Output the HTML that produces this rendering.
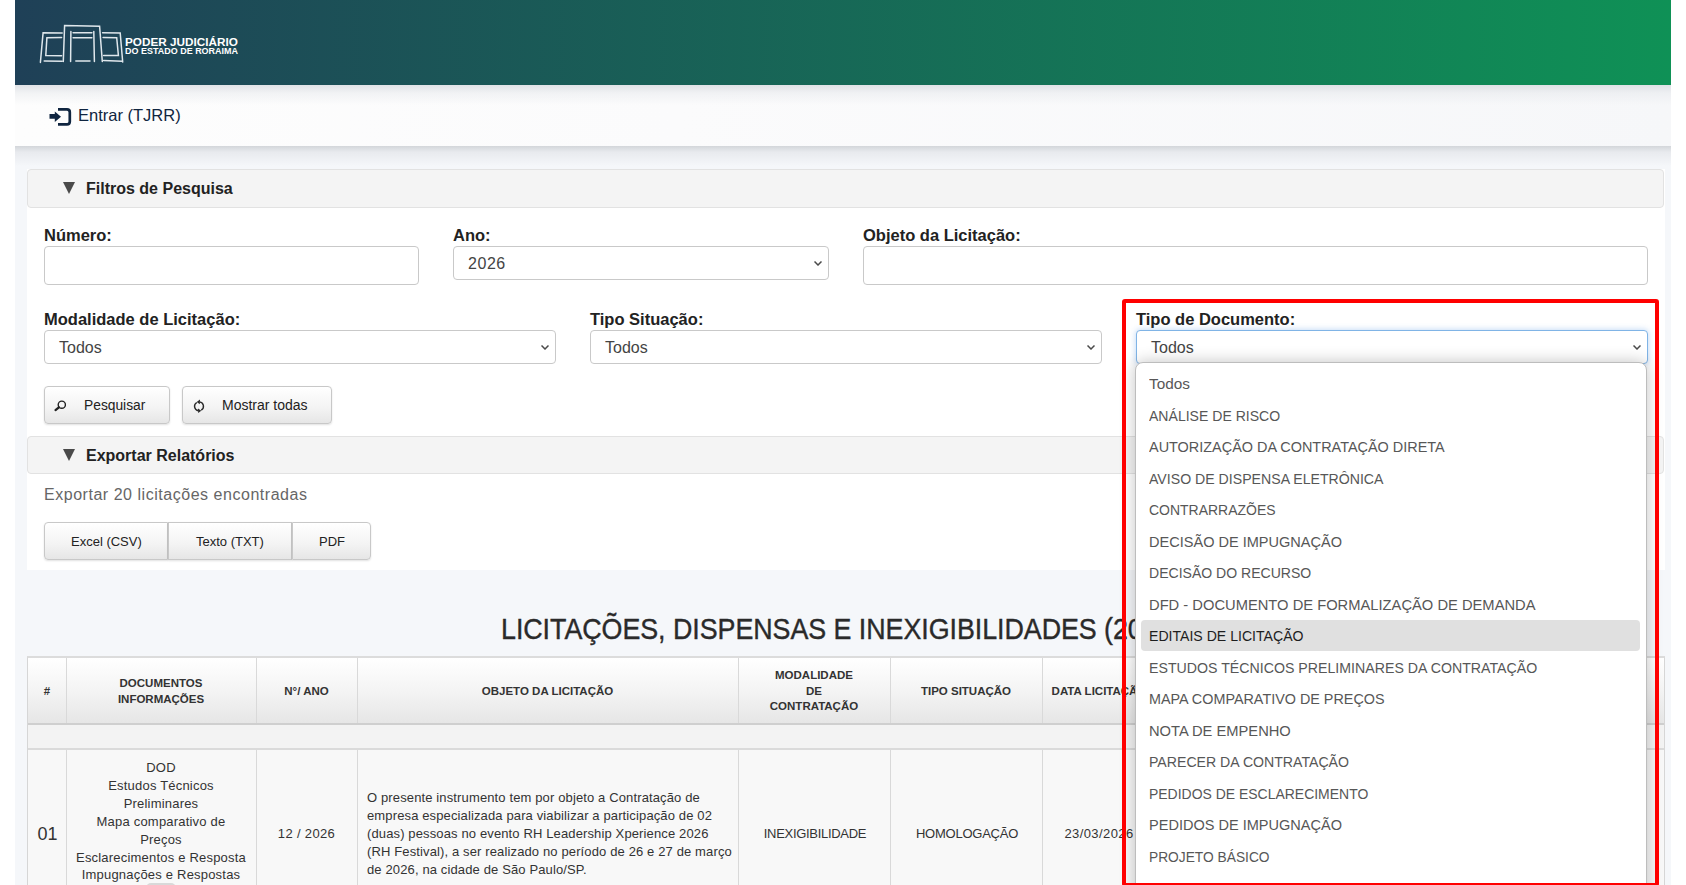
<!DOCTYPE html>
<html><head><meta charset="utf-8">
<style>
*{box-sizing:border-box;margin:0;padding:0}
html,body{width:1686px;height:885px;overflow:hidden;background:#fff;font-family:"Liberation Sans",sans-serif;color:#222}
.abs{position:absolute}
#wrap{position:absolute;left:15px;top:0;width:1656px;height:885px;background:#f5f7fa}
#hdr{position:absolute;left:0;top:0;width:1656px;height:85px;background:linear-gradient(90deg,#1f4057 0%,#0f9156 100%)}
#nav{position:absolute;left:0;top:85px;width:1656px;height:61px;background:linear-gradient(180deg,rgba(215,218,223,.75) 0px,rgba(225,228,232,.4) 8px,rgba(240,242,245,0) 20px),linear-gradient(90deg,#fdfdfd 0%,#fbfbfc 40%,#f6f7f9 100%)}
#navshadow{position:absolute;left:0;top:146px;width:1656px;height:20px;background:linear-gradient(180deg,#d3d6da 0,#e8eaee 6px,#f5f7fa 20px)}
#panel{position:absolute;left:12px;top:169px;width:1638px;height:401px;background:#fff}
.sechdr{position:absolute;left:0;width:1637px;height:38.5px;background:#f4f4f4;border:1px solid #e2e2e2;border-radius:4px}
.sechdr .tri{position:absolute;left:35px;top:12px;width:0;height:0;border-left:6.6px solid transparent;border-right:6.6px solid transparent;border-top:12.5px solid #4a4a4a}
.sechdr .t{position:absolute;left:58px;top:9px;font-size:16px;font-weight:bold;color:#222;line-height:20px}
.lbl{position:absolute;font-size:16.5px;font-weight:bold;color:#222;line-height:18px}
.inp{position:absolute;background:#fff;border:1px solid #c9c9c9;border-radius:4px}
.sel{position:absolute;background:#fff;border:1px solid #c9c9c9;border-radius:4px;font-size:16px;color:#444}
.sel span{position:absolute;left:14px;top:8px;line-height:18px}
.chev{position:absolute;right:6px;top:14px;width:8px;height:5px}
.btn{position:absolute;background:linear-gradient(180deg,#ffffff 0%,#f3f3f3 60%,#e6e6e6 100%);border:1px solid #c8c8c8;border-radius:4px;box-shadow:0 1px 2px rgba(0,0,0,.12);font-size:13px;color:#222}
.btn span{position:absolute;line-height:15px}

.thead{background:linear-gradient(180deg,#ffffff 0%,#f4f4f4 50%,#e6e6e6 100%)}
.vl{position:absolute;top:0;width:1px;height:300px;background:#d9d9d9}
.th{position:absolute;text-align:center;font-size:11.5px;font-weight:bold;color:#333;line-height:15.7px}
.td{position:absolute;text-align:center;font-size:13px;color:#333;line-height:17.9px}

.opt{position:absolute;left:13px;font-size:15.5px;transform-origin:0 50%;color:#575757;line-height:32px;white-space:nowrap}
.opt.hl{color:#1e1e1e}
</style></head><body>
<div id="wrap">
  <div id="hdr">
    <svg class="abs" style="left:-15px;top:0" width="140" height="85" viewBox="0 0 140 85">
      <g fill="none" stroke="#dfe7ec" stroke-width="1.5" stroke-linecap="round">
        <path d="M62.2 33.1 L43.1 32.8 L40.4 62.4 M44.2 60.9 L62.2 61.2"/>
        <path d="M61.6 37.5 L46.9 37.7 L45.8 55.5 L61.6 55.7"/>
        <path d="M63.3 61.5 L64.6 25.5 L99.6 26.3 L102.3 61.5"/>
        <path d="M70.9 31.5 L70.6 61.5 M93.8 31.5 L94.4 61.5 M73.1 32.8 L91.9 32.8 M73.1 37.7 L91.9 37.7 M75.8 60.9 L90 60.9"/>
        <path d="M102.6 32.8 L120.2 32.9 L122.7 62 M103.6 60.6 L122.2 61.3"/>
        <path d="M103.1 37.5 L116.7 37.7 L118.4 55.5 L103.6 55.5"/>
      </g>
    </svg>
    <div class="abs" style="left:110.3px;top:38px;font-size:10px;font-weight:bold;color:#fff;line-height:10px;white-space:nowrap;transform:scaleX(1.174);transform-origin:0 0">PODER JUDICIÁRIO</div>
    <div class="abs" style="left:110.3px;top:46.5px;font-size:8.8px;font-weight:bold;color:#fff;line-height:8.8px;white-space:nowrap;transform:scaleX(1.02);transform-origin:0 0">DO ESTADO DE RORAIMA</div>
  </div>
  <div id="navshadow"></div>
  <div id="nav">
    <svg class="abs" style="left:34px;top:23px" width="23" height="19" viewBox="0 0 23 19">
      <path d="M9 1.35 H18 Q20.8 1.35 20.8 4.2 V13.6 Q20.8 16.45 18 16.45 H9" fill="none" stroke="#0f2540" stroke-width="2.7"/>
      <path d="M0.5 6 H5.8 V3.4 L12 8.65 L5.8 13.9 V10.7 H0.5 Z" fill="#0f2540"/>
    </svg>
    <div class="abs" style="left:63px;top:20px;font-size:16.5px;color:#0f2540;line-height:20px">Entrar (TJRR)</div>
  </div>

  <div id="panel">
    <div class="sechdr" style="top:0"><div class="tri"></div><div class="t">Filtros de Pesquisa</div></div>
    <div class="lbl" style="left:17px;top:57px">Número:</div>
    <div class="inp" style="left:17px;top:77px;width:375px;height:39px"></div>
    <div class="lbl" style="left:426px;top:57px">Ano:</div>
    <div class="sel" style="left:426px;top:77px;width:376px;height:34px"><span style="letter-spacing:0.55px">2026</span><svg class="chev" viewBox="0 0 8 5"><path d="M0.5 0.5 L4 4 L7.5 0.5" fill="none" stroke="#4a4a4a" stroke-width="1.5"/></svg></div>
    <div class="lbl" style="left:836px;top:57px">Objeto da Licitação:</div>
    <div class="inp" style="left:836px;top:77px;width:785px;height:39px"></div>

    <div class="lbl" style="left:17px;top:141px">Modalidade de Licitação:</div>
    <div class="sel" style="left:17px;top:161px;width:512px;height:34px"><span>Todos</span><svg class="chev" viewBox="0 0 8 5"><path d="M0.5 0.5 L4 4 L7.5 0.5" fill="none" stroke="#4a4a4a" stroke-width="1.5"/></svg></div>
    <div class="lbl" style="left:563px;top:141px">Tipo Situação:</div>
    <div class="sel" style="left:563px;top:161px;width:512px;height:34px"><span>Todos</span><svg class="chev" viewBox="0 0 8 5"><path d="M0.5 0.5 L4 4 L7.5 0.5" fill="none" stroke="#4a4a4a" stroke-width="1.5"/></svg></div>
    <div class="lbl" style="left:1109px;top:141px">Tipo de Documento:</div>
    <div class="sel" style="left:1109px;top:161px;width:512px;height:34px;border-color:#80b4e6;box-shadow:0 0 6px rgba(100,160,230,.45)"><span>Todos</span><svg class="chev" viewBox="0 0 8 5"><path d="M0.5 0.5 L4 4 L7.5 0.5" fill="none" stroke="#4a4a4a" stroke-width="1.5"/></svg></div>

    <div class="btn" style="left:17px;top:217px;width:126px;height:38px">
      <svg class="abs" style="left:7px;top:11px" width="14" height="14" viewBox="0 0 14 14"><circle cx="9.8" cy="6.7" r="3.6" fill="none" stroke="#222" stroke-width="1.4"/><path d="M6.9 9.3 L3.5 12.1" stroke="#222" stroke-width="2.2" stroke-linecap="round"/></svg>
      <span style="left:39px;top:11px;font-size:13.8px">Pesquisar</span>
    </div>
    <div class="btn" style="left:155px;top:217px;width:150px;height:38px">
      <svg class="abs" style="left:9px;top:11px" width="14" height="16" viewBox="0 0 14 16"><path d="M4.8 4.49 A4.4 4.4 0 0 0 6.4 12.7" fill="none" stroke="#2a2a2a" stroke-width="1.4"/><path d="M6 10.5 L9.3 12.7 L6.2 15 Z" fill="#2a2a2a"/><path d="M9.2 12.11 A4.4 4.4 0 0 0 7.6 3.9" fill="none" stroke="#2a2a2a" stroke-width="1.4"/><path d="M8 1.6 L4.7 3.9 L7.8 6.2 Z" fill="#2a2a2a"/></svg>
      <span style="left:39px;top:11px;font-size:14px">Mostrar todas</span>
    </div>

    <div class="sechdr" style="top:267px;height:37.5px"><div class="tri" style="top:12px"></div><div class="t" style="top:9px">Exportar Relatórios</div></div>
    <div class="abs" style="left:17px;top:316px;font-size:16px;color:#666;line-height:20px;letter-spacing:0.53px">Exportar 20 licitações encontradas</div>
    <div class="btn" style="left:17px;top:353px;width:124px;height:38px;border-radius:4px 0 0 4px"><span style="left:26px;top:11px">Excel (CSV)</span></div>
    <div class="btn" style="left:141px;top:353px;width:124px;height:38px;border-radius:0"><span style="left:27px;top:11px">Texto (TXT)</span></div>
    <div class="btn" style="left:265px;top:353px;width:79px;height:38px;border-radius:0 4px 4px 0"><span style="left:26px;top:11px">PDF</span></div>
  </div>

  <div class="abs" style="left:486px;top:614px;width:900px;white-space:nowrap;text-align:left;font-size:26.85px;color:#2a2a2a;line-height:32px;-webkit-text-stroke:0.35px #2a2a2a;letter-spacing:-0.05px;transform:scaleY(1.11);transform-origin:50% 24px">LICITAÇÕES, DISPENSAS E INEXIGIBILIDADES (2026)</div>

  <div id="tbl" class="abs" style="left:12px;top:656px;width:1638px;height:240px;border-top:2px solid #dcdcdc;border-left:1px solid #d6d6d6;border-right:1px solid #d6d6d6">
    <div class="abs thead" style="left:0;top:0;width:1636px;height:65px"></div>
    <div class="abs" style="left:0;top:92px;width:1636px;height:200px;background:#f8f8f8"></div>
    <div class="vl" style="left:38px"></div>
    <div class="vl" style="left:228px"></div>
    <div class="vl" style="left:329px"></div>
    <div class="vl" style="left:710px"></div>
    <div class="vl" style="left:862px"></div>
    <div class="vl" style="left:1014px"></div>
    <div class="vl" style="left:1128px"></div>
    <div class="abs" style="left:0;top:65px;width:1636px;height:27px;background:#f3f3f3;border-top:2px solid #cfcfcf;border-bottom:2px solid #dadada"></div>
    <div class="th" style="left:0;width:38px;top:26px">#</div>
    <div class="th" style="left:38px;width:190px;top:18px">DOCUMENTOS<br>INFORMAÇÕES</div>
    <div class="th" style="left:228px;width:101px;top:26px">N°/ ANO</div>
    <div class="th" style="left:329px;width:381px;top:26px">OBJETO DA LICITAÇÃO</div>
    <div class="th" style="left:710px;width:152px;top:10px">MODALIDADE<br>DE<br>CONTRATAÇÃO</div>
    <div class="th" style="left:862px;width:152px;top:26px">TIPO SITUAÇÃO</div>
    <div class="th" style="left:1014px;width:114px;top:26px">DATA LICITAÇÃO</div>
    <div class="td" style="left:0;width:38px;top:168px;font-size:18px;padding-left:1px">01</div>
    <div class="td" style="left:38px;width:190px;top:101px;letter-spacing:0.2px">DOD<br>Estudos Técnicos<br>Preliminares<br>Mapa comparativo de<br>Preços<br>Esclarecimentos e Resposta<br>Impugnações e Respostas</div>
    <div class="td" style="left:228px;width:101px;top:167px;letter-spacing:0.35px">12 / 2026</div>
    <div class="td" style="left:329px;width:381px;top:131px;text-align:left;padding-left:10px;letter-spacing:0.13px">O presente instrumento tem por objeto a Contratação de<br>empresa especializada para viabilizar a participação de 02<br>(duas) pessoas no evento RH Leadership Xperience 2026<br>(RH Festival), a ser realizado no período de 26 e 27 de março<br>de 2026, na cidade de São Paulo/SP.</div>
    <div class="td" style="left:711px;width:152px;top:167px;letter-spacing:-0.3px">INEXIGIBILIDADE</div>
    <div class="td" style="left:863px;width:152px;top:167px;letter-spacing:-0.23px">HOMOLOGAÇÃO</div>
    <div class="td" style="left:1014px;width:114px;top:167px;letter-spacing:0.4px">23/03/2026</div>
    <div class="abs" style="left:118px;top:225px;width:30px;height:10px;border-radius:8px;background:#d9d9d9"></div>
  </div>
</div>
<div id="dd" class="abs" style="left:1135px;top:362px;width:512px;height:560px;background:#fff;border:1px solid #bdbdbd;border-radius:8px;box-shadow:0 0 16px rgba(0,0,0,.24)">
  <div class="abs" style="left:5px;top:257px;width:499px;height:31px;background:#e0e0e0;border-radius:4px"></div>
<div class="opt" style="top:5.00px;transform:scaleX(0.9901)">Todos</div>
<div class="opt" style="top:36.53px;transform:scaleX(0.9066)">ANÁLISE DE RISCO</div>
<div class="opt" style="top:68.06px;transform:scaleX(0.9314)">AUTORIZAÇÃO DA CONTRATAÇÃO DIRETA</div>
<div class="opt" style="top:99.59px;transform:scaleX(0.9115)">AVISO DE DISPENSA ELETRÔNICA</div>
<div class="opt" style="top:131.12px;transform:scaleX(0.9018)">CONTRARRAZÕES</div>
<div class="opt" style="top:162.65px;transform:scaleX(0.9379)">DECISÃO DE IMPUGNAÇÃO</div>
<div class="opt" style="top:194.18px;transform:scaleX(0.9059)">DECISÃO DO RECURSO</div>
<div class="opt" style="top:225.71px;transform:scaleX(0.9496)">DFD - DOCUMENTO DE FORMALIZAÇÃO DE DEMANDA</div>
<div class="opt hl" style="top:257.24px;transform:scaleX(0.9092)">EDITAIS DE LICITAÇÃO</div>
<div class="opt" style="top:288.77px;transform:scaleX(0.9143)">ESTUDOS TÉCNICOS PRELIMINARES DA CONTRATAÇÃO</div>
<div class="opt" style="top:320.30px;transform:scaleX(0.9271)">MAPA COMPARATIVO DE PREÇOS</div>
<div class="opt" style="top:351.83px;transform:scaleX(0.9481)">NOTA DE EMPENHO</div>
<div class="opt" style="top:383.36px;transform:scaleX(0.9108)">PARECER DA CONTRATAÇÃO</div>
<div class="opt" style="top:414.89px;transform:scaleX(0.9006)">PEDIDOS DE ESCLARECIMENTO</div>
<div class="opt" style="top:446.42px;transform:scaleX(0.9374)">PEDIDOS DE IMPUGNAÇÃO</div>
<div class="opt" style="top:477.95px;transform:scaleX(0.8877)">PROJETO BÁSICO</div>
</div>
<div id="redbox" class="abs" style="left:1122px;top:299px;width:537px;height:588px;border:4px solid #f00;border-radius:3px"></div>

</body></html>
